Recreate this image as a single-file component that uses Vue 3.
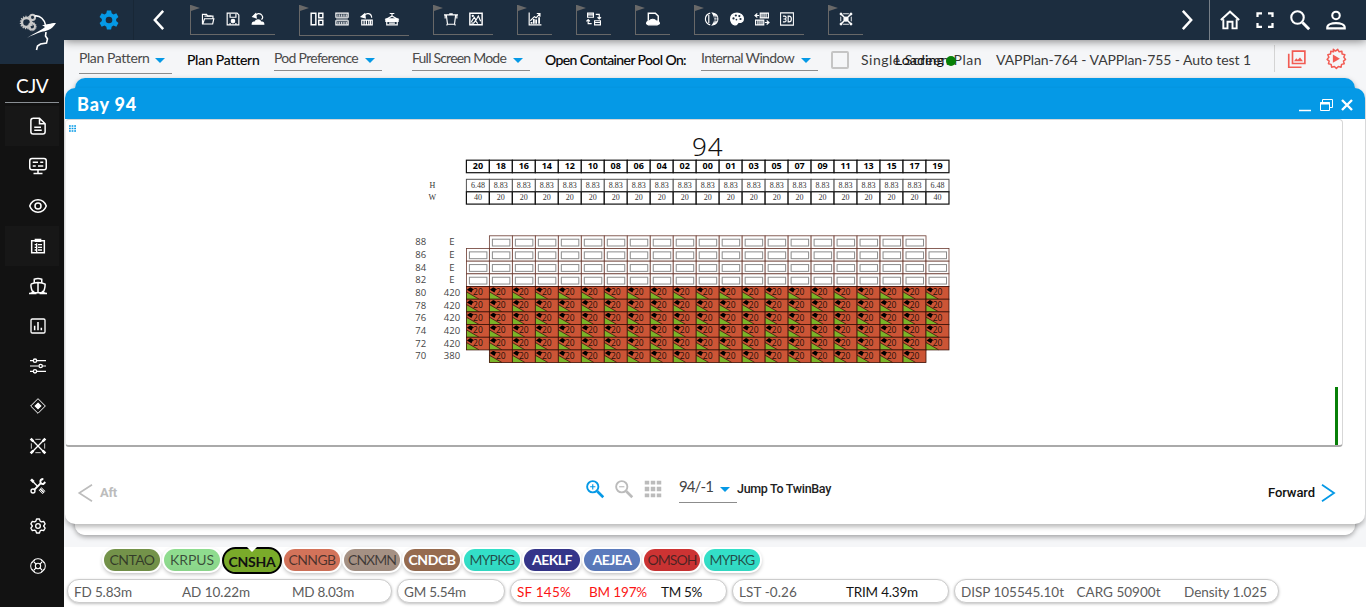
<script setup>
import { h } from 'vue'

const glyphs = {
  gear: '<path fill-rule="evenodd" fill="currentColor" stroke="none" d="M9.500 0.500h5l.7 3.500 2.200 1.300 3.400-1.300 2.500 4.400-2.700 2.300v2.600l2.700 2.300-2.500 4.400-3.400-1.300-2.200 1.300-.7 3.500h-5l-.7-3.500-2.200-1.300-3.400 1.300L.7 15.600l2.700-2.300v-2.600L.7 8.400 3.200 4l3.400 1.300L8.800 4zM12 8a4 4 0 1 0 0 8 4 4 0 0 0 0-8z"/>',
  left: '<path stroke-width="3" d="M17 1 7 12l10 11"/>',
  right: '<path stroke-width="3" d="m7 1 10 11L7 23"/>',
  folder: '<path d="M2.500 21V4h7l2 3h9v4M3 20.500l3-9h16l-2 9z"/><path d="M6 7h12"/>',
  save: '<path d="M2 2h17l3 3v17H2z"/><path d="M7 3v6h10V3M7 22v-3M17 22v-3"/><circle cx="12" cy="15.500" r="3" fill="currentColor"/>',
  restore: '<path d="M7 7c2-5 9-6 12-1 2 3 1 5-1 7"/><path fill="currentColor" d="M3 8l5-5 1 7zM2 21c0-4 3-4 5-4 1-4 8-5 10 0 3 0 5 1 5 4z"/>',
  layout: '<path stroke-width="2.500" d="M2 2h8v20H2zM15 2h7v8h-7zM15 14h7v8h-7z"/>',
  stack: '<path d="M1.500 2h21v7h-21zM1.500 15h21v7h-21z"/><path stroke-width="1.500" d="M5 4v4M8 4v4M11 4v4M14 4v4M17 4v4M20 4v4M5 17v4M8 17v4M11 17v4M14 17v4M17 17v4M20 17v4M2 12h20"/>',
  rotate: '<path d="M3 14h18v8H3zM7 14v8M11 14v8M15 14v8M18 14v8M7 7c3-7 13-5 13 3"/><path fill="currentColor" d="M2 8l6-5 1 7z"/>',
  hanger: '<path d="M8 2.500h8M12 3v4L3 12h18l-9-5"/><path fill="currentColor" d="M1.500 12h21v4h-21z"/><path d="M3 16v6h18v-6M7 19h10"/>',
  basket: '<path d="M0 5h24M4 5l2 16h12l2-16M2 5v6M22 5v6M5 21v2M19 21v2M9 3h6"/>',
  picture: '<path stroke-width="2.500" d="M1.500 2h21v20h-21z"/><path d="m4 17 5-8 3 5 4-7 4 9M4 19h4l3-4 4 5"/><circle cx="6.500" cy="6.500" r="1" fill="currentColor"/>',
  chart: '<path d="M2 1v21h21"/><path d="M6 20v-3M10 20v-8M14 20v-7M19 20V9" stroke-width="3"/><path d="m4 15 7-7 3 2 6-7M15 2.500h5.500V8"/>',
  swap: '<path d="M1 2h10v7H1zM13 15h10v7H13zM15 4h6v8M8 20H2v-7M18 9l3 3 3-3M-1 16l3-3 3 3M1 5h9M13 18h9"/>',
  reload: '<path stroke-width="2.500" d="M4 15V2h12l5 5v10"/><path fill="currentColor" d="M1 20c0-4 3-5 5-5 3-4 9-3 11 0 4 0 6 2 6 5l-4 2H4z"/>',
  contrast: '<path d="M9 2C-2 5-2 19 9 22M6.500 5v14"/><path fill="currentColor" d="M13 2c12 2 12 18 0 20 5-6 5-13 0-20z"/><path stroke="#1c2d3f" stroke-width="1.200" d="M17 6v12M20 8v8M15 9h6M15 14h6"/>',
  palette: '<path fill="currentColor" d="M12 2C-4 3 0 21 8 22c5 1 4-4 7-4 4 0 8-1 8-7 0-5-5-9-11-9z"/><g fill="#1c2d3f" stroke="none"><circle cx="6" cy="11" r="1.900"/><circle cx="10" cy="6" r="1.900"/><circle cx="16" cy="7" r="1.900"/><circle cx="18" cy="12" r="1.900"/><circle cx="11" cy="13" r="1.500"/></g>',
  transfer: '<path d="M9 2h14v8H9zM12 2v8M15.500 2v8M19 2v8M1 14h14v8H1zM5 14v8M8.500 14v8M12 14v8M7 6H0M4 2.500 0 6l4 3.500M17 18h7M20 14.500l4 3.500-4 3.500"/>',
  three: '<path stroke-width="1.800" d="M1 1.500h22v21H1z"/><path d="M5 7h3q2.500 0 2.500 2.500T8 12H6m2 0q2.500 0 2.500 2.500T8 17H5M14 7v10h1.500q4 0 4-5t-4-5z"/>',
  lashing: '<path stroke-width="2.500" d="m3 3 18 18M21 3 3 21"/><path stroke-width="4" d="m2 2 3 3M22 2l-3 3M2 22l3-3M22 22l-3-3"/><path stroke-width="1.500" d="M7 3h10M7 21h10M3 8v8M21 8v8"/><circle cx="12" cy="12" r="3.500" fill="currentColor"/>',
  home: '<path stroke-width="2.300" d="M1 12 12 2l11 10M4 11v11h5v-8h6v8h5V11"/>',
  full: '<path stroke-width="3" d="M2 8V3h6M16 3h6v5M22 16v5h-6M8 21H2v-5"/>',
  search: '<circle cx="9" cy="9" r="7.500" stroke-width="2.500"/><path stroke-width="3.500" d="m15 15 8 8"/>',
  user: '<circle cx="12" cy="6.500" r="4.500" stroke-width="2.500"/><path stroke-width="2.500" d="M1.500 22v-1c0-7 21-7 21 0v1z"/>',
  doc: '<path d="M5 1.500h9L21.500 9v10.500q0 3-3 3h-13q-3 0-3-3v-15q0-3 3-3zM14 2v7h7M7 13.500h9M7 17.500h10"/>',
  monitor: '<rect x="1" y="2" width="22" height="15" rx="3"/><path d="M5 7h7M15 7h4M5 12h4M12 12h7M12 17v4M6 22h12"/>',
  eye: '<path d="M1 12C5 1 19 1 23 12 19 23 5 23 1 12z"/><circle cx="12" cy="12" r="4"/>',
  list: '<path stroke-width="2.200" d="M2.500 4h19v18h-19z"/><path fill="currentColor" d="M8 2h8v3H8z"/><path d="M7 10h2M12 10h6M7 14h2M12 14h6M7 18h2M12 18h6M10 8v13"/>',
  ship: '<path d="M7 7V3q5-2 10 0v4M2.500 9.500c5-3 14-3 19 0 0 5-1 9-4 12M2.500 9.500c0 5 1 9 4 12M12 7.500V21M0 22c4 0 5-2 7-3M24 22c-4 0-5-2-7-3M3 22h7M14 22h7M7 21h10"/>',
  bars: '<rect x="1.500" y="1.500" width="21" height="21" rx="2"/><path d="M7 18.500v-7M12 18.500V6M17 18.500v-4" stroke-width="2.300"/>',
  sliders: '<path stroke-width="1.800" d="M0 4h5M10 4h14M0 12h13M18 12h6M0 20h5M10 20h14"/><circle cx="7.500" cy="4" r="2.500"/><circle cx="16" cy="12" r="2.500"/><circle cx="7.500" cy="20" r="2.500"/>',
  diamond: '<path stroke-width="1.500" d="M12 1 23 12 12 23 1 12z"/><path fill="currentColor" d="m12 8 4 4-4 4-4-4z"/>',
  frame: '<path d="m2 2 20 20M22 2 2 22"/><path stroke-width="4" d="m1 1 4 4M23 1l-4 4M1 23l4-4M23 23l-4-4"/><path stroke-width="1.200" d="M8 2h8M8 22h8M2 8v8M22 8v8"/>',
  tools: '<path stroke-width="4" d="m1.500 2 4 4"/><path stroke-width="2" d="m5 6 7 7"/><path stroke-width="6" d="m15 16 6 6"/><path stroke-width="2.800" d="m6 18 11-11"/><circle cx="4.500" cy="19.500" r="3"/><path stroke-width="2.800" d="M20 1.500c-6 0-6 8 0 7.500l3-3"/><path stroke="#121212" stroke-width="1" d="m14 17 6 6M16 15l6 6"/>',
  cog: '<path stroke-width="2" stroke-linejoin="round" d="M9.800 1.500h4.400l1 3.200 2 1.200 3.300-.8 2.200 3.800L20.400 12l2.300 3.100-2.200 3.800-3.300-.8-2 1.200-1 3.200H9.800l-1-3.200-2-1.200-3.300.8-2.200-3.800L3.600 12 1.300 8.900l2.200-3.800 3.300.8 2-1.200z"/><circle cx="12" cy="12" r="3.500"/>',
  buoy: '<circle cx="12" cy="12" r="11" stroke-width="1.500"/><circle cx="12" cy="12" r="4" stroke-width="1.600"/><path stroke-width="1.600" d="m6 6 3.500 3.500M18 6l-3.500 3.500M6 18l3.500-3.500M18 18l-3.500-3.500"/><path stroke-width="1.300" d="M8 2 5 6 2 8M16 2l3 4 3 2M8 22l-3-4-3-2M16 22l3-4 3-2"/>',
  gallery: '<path stroke-width="2.200" d="M1 5v18h17M6 1.500h16.500V18H6z"/><path fill="currentColor" d="m8 15 3-4 2 2 3-3 4 5z" stroke="none"/>',
  play: '<path stroke-width="1.700" stroke-linejoin="round" d="m9.500 1.500 2.500 2 2.500-2 1.700 2.800 3.100-.7.200 3.200 3.200.8-1.200 3L23.500 13l-2.400 2 .9 3-3.100.7-.5 3.200-3.100-.8-2.300 2.200-2.300-2.200-3.100.8-.6-3.200-3.100-.7.900-3-2.400-2 2-2.400-1.200-3 3.200-.8.200-3.200 3.100.7z"/><path fill="currentColor" stroke="none" d="m9 7.500 8 4.700-8 4.700z"/>',
  zoomin: '<circle cx="9" cy="9" r="7.500" stroke-width="2.500"/><path stroke-width="3.500" d="m15 15 8 8"/><path stroke-width="1.500" d="M5.500 9h7M9 5.500v7"/>',
  zoomout: '<circle cx="9" cy="9" r="7.500" stroke-width="2.500"/><path stroke-width="3.500" d="m15 15 8 8"/><path stroke-width="1.500" d="M5.500 9h7"/>',
  dots: '<path fill="currentColor" stroke="none" d="M1 1h6v5H1zm8 0h6v5H9zm8 0h6v5h-6zM1 9h6v6H1zm8 0h6v6H9zm8 0h6v6h-6zM1 18h6v5H1zm8 0h6v5H9zm8 0h6v5h-6z"/>',
  chevL: '<path stroke-width="2.200" d="M20 1 3 12l17 11"/>',
  chevR: '<path stroke-width="2.400" d="m4 1 16 11L4 23"/>',
}
const Icon = (p) => h('svg', {
  viewBox: '0 0 24 24', width: p.size || 18, height: p.size || 18, fill: 'none',
  stroke: 'currentColor', 'stroke-width': 2, innerHTML: glyphs[p.name],
})
Icon.props = ['name', 'size']

// Tracks a label so that it fills the given width in pixels.
const vFit = {
  mounted(el, { value }) {
    const range = document.createRange()
    range.selectNodeContents(el)
    const natural = range.getBoundingClientRect().width
    el.style.letterSpacing = (value - natural) / el.textContent.length + 'px'
  },
}

const side = ['doc', 'monitor', 'eye', 'list', 'ship', 'bars', 'sliders', 'diamond', 'frame', 'tools', 'cog', 'buoy']
const groups = [
  ['folder', 'save', 'restore'], ['layout', 'stack', 'rotate', 'hanger'], ['basket', 'picture'], ['chart'],
  ['swap'], ['reload'], ['contrast', 'palette', 'transfer', 'three'], ['lashing'],
]
const ports = [
  ['CNTAO', '#74934a', 45], ['KRPUS', '#8fdc8f', 44], ['CNSHA', '#7aab2a', 47], ['CNNGB', '#d3735a', 47],
  ['CNXMN', '#a59184', 48], ['CNDCB', '#966b4f', 47], ['MYPKG', '#33dfc8', 45], ['AEKLF', '#35358a', 40],
  ['AEJEA', '#5b7bbd', 39], ['OMSOH', '#cd3333', 49], ['MYPKG', '#33dfc8', 45],
]
const textTone = (c) => (c === 'CNSHA' ? 'current' : ['CNDCB', 'AEKLF', 'AEJEA'].includes(c) ? 'light' : '')

const cols = ['20', '18', '16', '14', '12', '10', '08', '06', '04', '02', '00', '01', '03', '05', '07', '09', '11', '13', '15', '17', '19']
const tiers = [
  ['88', 'E'], ['86', 'E'], ['84', 'E'], ['82', 'E'], ['80', '420'], ['78', '420'], ['76', '420'], ['74', '420'], ['72', '420'], ['70', '380'],
]
const CW = 22.98
const RH = 12.68
const cx = (i) => 400.4 + i * CW
const ry = (r) => 115.8 + r * RH
const cells = tiers.flatMap(([t], r) =>
  cols.map((_, i) => ({ i, r, full: r > 3 })).filter(({ i }) => !((t === '88' || t === '70') && (i === 0 || i === 20))),
)
</script>

<template>
  <div class="page">
    <aside class="side">
      <div class="logo">
        <svg width="64" height="64" viewBox="0 0 64 64" fill="none" stroke="#fff">
          <g stroke="#c9c9c9">
            <circle cx="26.500" cy="22.500" r="4.500" stroke-width="2.400" />
            <circle cx="26.500" cy="22.500" r="6" stroke-dasharray="1.200 1.200" stroke-width="1.500" />
            <circle cx="32.500" cy="17.300" r="2.600" stroke-width="2" />
            <circle cx="32" cy="26.500" r="3" stroke-width="2" />
            <circle cx="32" cy="26.500" r="4.300" stroke-width="1" stroke-dasharray="1 1" />
          </g>
          <path stroke-width="1.600" d="M34.500 16c6-1 10 4 11 9M46 32l-.5 4 2 3-1 4-6 1-3 2-1 4" />
          <path fill="#fff" stroke="none" d="M27 38c7-5 13-7 18-11l-3-2c5 0 8-2 14-2-4 7-10 8-15 9-5 2-9 3-14 6z" />
        </svg>
      </div>
      <div class="cjv"><span v-fit="32">CJV</span></div>
      <nav><div v-for="(n, i) in side" :key="n" class="nav" :class="{ lit: i === 0 || i === 3 }"><Icon :name="n" :size="i < 2 || i === 2 || i === 4 ? 18 : 16" /></div></nav>
    </aside>

    <main class="main">
      <header class="top">
        <div class="gear"><Icon name="gear" :size="20" /></div>
        <div class="prev"><Icon name="left" :size="20" /></div>
        <div class="groups">
          <div v-for="(g, i) in groups" :key="i" class="group" :class="{ tall: i === 1 }">
            <span v-for="n in g" :key="n" class="tool"><Icon :name="n" :size="14" /></span>
          </div>
        </div>
        <div class="next"><Icon name="right" :size="20" /></div>
        <div class="actions">
          <Icon name="home" :size="20" /><Icon name="full" :size="18" /><Icon name="search" :size="20" /><Icon name="user" :size="20" />
        </div>
      </header>

      <div class="bar">
        <div class="sel s1"><span v-fit="70">Plan Pattern</span><i /></div>
        <b class="lab l1" v-fit="72">Plan Pattern</b>
        <div class="sel s2"><span v-fit="84">Pod Preference</span><i /></div>
        <div class="sel s3"><span v-fit="94">Full Screen Mode</span><i /></div>
        <b class="lab l2" v-fit="141">Open Container Pool On:</b>
        <div class="sel s4"><span v-fit="93">Internal Window</span><i /></div>
        <div class="check" />
        <div class="single"><span v-fit="121">Single Screen Plan</span><div class="loading"><span v-fit="49">Loading</span></div><div class="dot" /></div>
        <div class="plan"><span v-fit="255">VAPPlan-764 - VAPPlan-755 - Auto test 1</span></div>
        <div class="alerts"><Icon name="gallery" :size="18" /><Icon name="play" :size="21" /></div>
      </div>

      <section class="stage">
        <div class="behind" />
        <div class="window">
          <div class="title">
            <h1 v-fit="60">Bay 94</h1>
            <svg class="wbtn" width="56" height="16" viewBox="0 0 56 16" fill="none" stroke="#fff">
              <path stroke-width="1.500" d="M0 13.500h12" />
              <path d="M23.500 5.500V2.500h10v8h-3" /><path d="M21.500 5.500h9v8h-9z" /><path stroke-width="2" d="M21 6.500h10" />
              <path stroke-width="2.400" d="m43 3 10 10M53 3 43 13" />
            </svg>
          </div>
          <div class="canvas">
            <svg width="1276" height="325" viewBox="0 0 1276 325">
              <path d="M3 6h7M3 8.500h7M3 11h7" stroke="#0599e6" stroke-width="1.700" stroke-dasharray="1.800 .8" />
              <text x="626" y="36" class="big" textLength="30.500">94</text>
              <g v-for="(c, i) in cols" :key="c">
                <rect :x="cx(i)" y="40.200" :width="CW" height="12.500" class="box" />
                <text :x="cx(i) + CW / 2" y="48.900" class="colno">{{ c }}</text>
                <rect :x="cx(i)" y="59.300" :width="CW" height="12.500" class="box thin" />
                <text :x="cx(i) + CW / 2" y="68" class="dim">{{ i === 0 || i === 20 ? '6.48' : '8.83' }}</text>
                <rect :x="cx(i)" y="71.800" :width="CW" height="12.300" class="box" />
                <text :x="cx(i) + CW / 2" y="80" class="dim">{{ i === 0 || i === 20 ? '40' : '20' }}</text>
              </g>
              <text x="366.300" y="68" class="dim">H</text>
              <text x="366.300" y="80" class="dim">W</text>
              <g v-for="([t, w], r) in tiers" :key="t" class="tier">
                <text x="354.700" :y="ry(r) + 9.500">{{ t }}</text>
                <text x="386" :y="ry(r) + 9.500">{{ w }}</text>
              </g>
              <g v-for="c in cells" :key="c.r + '-' + c.i" :transform="`translate(${cx(c.i)} ${ry(c.r)})`">
                <template v-if="c.full">
                  <rect :width="CW" :height="RH" fill="#cc5536" />
                  <path d="M0 5.800 12.500 12.680H0z" fill="#7ab428" />
                  <path d="M0 5.300 12.500 12.500" stroke="#33210c" stroke-width=".8" />
                  <path d="M.5 3.200 3.500 1h1L8 3.200H6.500L5 6z" fill="#000" />
                  <rect :width="CW" :height="RH" fill="none" stroke="#3a0f06" stroke-width=".8" />
                  <text x="11.500" y="8.900" class="load">20</text>
                </template>
                <template v-else>
                  <rect :width="CW" :height="RH" fill="#fff" stroke="#6b3a30" stroke-width=".8" />
                  <rect x="3" y="3.400" width="17.500" height="6.800" fill="#fff" stroke="#8b8b8b" stroke-width="1" />
                </template>
              </g>
            </svg>
            <div class="gauge" />
          </div>
          <footer class="foot">
            <div class="aft"><Icon name="chevL" :size="18" /><span v-fit="17">Aft</span></div>
            <div class="mid">
              <Icon name="zoomin" class="blue" /><Icon name="zoomout" /><Icon name="dots" />
              <div class="bay"><span v-fit="34">94/-1</span><i /></div>
              <span class="jump" v-fit="94">Jump To TwinBay</span>
            </div>
            <div class="fwd"><span v-fit="47">Forward</span><Icon name="chevR" :size="18" /></div>
          </footer>
        </div>
      </section>

      <div class="status">
        <div class="ports">
          <div v-for="([c, bg, w], i) in ports" :key="i" class="port" :class="textTone(c)" :style="{ backgroundColor: bg }"><span v-fit="w">{{ c }}</span></div>
        </div>
        <div class="pills">
          <div class="pill p1"><span v-fit="58">FD 5.83m</span><span v-fit="68">AD 10.22m</span><span v-fit="62">MD 8.03m</span></div>
          <div class="pill p2"><span v-fit="62">GM 5.54m</span></div>
          <div class="pill p3"><span class="red" v-fit="54">SF 145%</span><span class="red" v-fit="58">BM 197%</span><span class="dark" v-fit="41">TM 5%</span></div>
          <div class="pill p4"><span v-fit="58">LST -0.26</span><span class="dark" v-fit="72">TRIM 4.39m</span></div>
          <div class="pill p5"><span v-fit="103">DISP 105545.10t</span><span v-fit="84">CARG 50900t</span><span v-fit="83">Density 1.025</span></div>
        </div>
      </div>
    </main>
  </div>
</template>

<style>
body { margin: 0; overflow: hidden; }
</style>
<style scoped>
* { box-sizing: border-box; }
.page { display: flex; width: 1366px; height: 607px; overflow: hidden; background: #f5f6f8; font-family: Lato, "Open Sans", sans-serif; font-size: 14px; white-space: nowrap; color: #3a3a3a; }
svg { display: block; flex: none; overflow: visible; }
span, b, h1 { white-space: nowrap; }
.side { width: 64px; height: 607px; flex: none; background: #121212; color: #fff; }
.logo { height: 64px; background: #1c2d3f; }
.cjv { height: 39px; margin: 0 5px 3px; border-bottom: 1px solid #8a8f94; text-align: center; font-size: 19px; line-height: 44px; }
.nav { height: 40px; margin: 0 5px; padding-left: 12px; display: flex; align-items: center; justify-content: center; }
.nav.lit { background: #171717; }
.main { width: 1302px; display: flex; flex-direction: column; }
.top { height: 40px; flex: none; background: #1c2d3f; color: #fff; display: flex; position: relative; z-index: 2; box-shadow: 0 1px 9px rgba(0,0,0,.5); clip-path: inset(0 0 -12px 0); }
.gear { width: 70px; padding: 10px 0 0 35px; color: #0599e6; border-right: 1px solid #182736; }
.prev { width: 56px; padding: 10px 0 0 15px; }
.groups { width: 987px; display: flex; gap: 24px; align-items: flex-start; padding-top: 5px; }
.group { position: relative; height: 30px; padding: 0 5px 0 4px; display: flex; border-left: 1px solid #686868; border-bottom: 1px solid #686868; }
.group.tall { height: 31px; }
.group::before { content: ""; position: absolute; left: 0; top: 0; border-left: 9px solid #686868; border-top: 3px solid transparent; border-bottom: 3px solid transparent; }
.tool { width: 25px; height: 28px; display: flex; justify-content: center; align-items: center; }
.next { width: 33px; padding: 10px 0 0; border-right: 1px solid #777f88; }
.actions { display: flex; gap: 16px; align-items: center; padding-left: 10px; }
.bar { height: 38px; flex: none; display: flex; padding-left: 15px; }
.sel { height: 31px; flex: none; border-bottom: 1px solid #8c8c8c; display: flex; position: relative; padding-top: 9px; line-height: 18px; color: #4a4a4a; }
.s1 { width: 93px; height: 34px; }
.s2 { width: 108px; margin-left: 15px; }
.s3 { width: 118px; margin-left: 30px; }
.s4 { width: 117px; margin-left: 15px; }
.sel i, .bay i { margin-left: auto; margin-right: 7px; margin-top: 9px; width: 0; height: 0; border: 5px solid transparent; border-top-color: #0599e6; border-bottom: 0; }
.lab { flex: none; font-weight: 400; line-height: 19px; padding-top: 10px; color: #000; -webkit-text-stroke: .15px #000; }
.l1 { width: 72px; margin-left: 15px; }
.l2 { width: 141px; margin-left: 15px; }
.check { width: 18px; height: 18px; margin: 11px 12px 0 13px; border: 2px solid #c5c5c5; border-radius: 2px; flex: none; }
.single { position: relative; width: 135px; flex: none; padding-top: 11px; line-height: 18px; }
.loading { position: absolute; left: 34px; top: 11px; color: #111; }
.dot { position: absolute; left: 85px; top: 16px; width: 10px; height: 10px; border-radius: 50%; background: #078007; }
.plan { width: 278px; flex: none; padding-top: 10px; line-height: 19px; }
.alerts { height: 27px; margin-top: 5px; border-left: 1px solid #d4d4d4; padding-left: 13px; display: flex; gap: 19px; align-items: center; color: #f25c54; }
.stage { height: 469px; flex: none; position: relative; padding: 10px 1px 0; }
.behind { position: absolute; left: 11px; top: 0; width: 1280px; height: 457px; border-radius: 10px; background: linear-gradient(#0599e6 40px, #fff 40px); box-shadow: 0 2px 5px rgba(0,0,0,.35); }
.window { position: relative; width: 1300px; height: 436px; border-radius: 10px; background: #fff; box-shadow: 0 3px 5px rgba(0,0,0,.28); }
.title { height: 31px; background: #0599e6; border-radius: 10px 10px 0 0; display: flex; justify-content: space-between; padding: 0 10px 0 12px; }
h1 { margin: 0; color: #fff; font-size: 18px; font-weight: 900; line-height: 32px; }
.wbtn { margin-top: 9px; }
.canvas { position: relative; width: 1278px; height: 328px; border: 1px solid #d7d7d7; border-left-color: #eee; border-bottom: 2px solid #aaa; border-radius: 4px; }
.gauge { position: absolute; right: 4px; bottom: 0; width: 3px; height: 58px; background: #078007; }
.box { fill: #fff; stroke: #111; stroke-width: 1.2; }
.thin { stroke: #555; stroke-width: 1; }
.big { font: 300 26px "Noto Sans", "Open Sans", sans-serif; fill: #111; stroke: none; }
.colno { font: 700 9px "Open Sans", sans-serif; text-anchor: middle; fill: #000; }
.dim { font: 8px "Liberation Serif", serif; text-anchor: middle; fill: #333; }
.tier text { font: 9.500px "Open Sans", sans-serif; text-anchor: middle; fill: #444; }
.load { font: 8.500px "Open Sans", sans-serif; text-anchor: middle; fill: #24100a; }
.foot { height: 77px; display: flex; font-family: Roboto, sans-serif; font-size: 13px; }
.aft { width: 521px; padding: 37px 0 0 12px; display: flex; gap: 5px; color: #bcbcbc; font-weight: 700; line-height: 18px; }
.mid { width: 682px; display: flex; gap: 11px; padding-top: 33px; color: #bbb; }
.blue { color: #0599e6; }
.bay { width: 58px; height: 23px; margin: 0 -11px 0 6px; border-bottom: 1px solid #8c8c8c; display: flex; color: #444; font: 15px/17px Lato, sans-serif; }
.bay span { margin-top: -2px; }
.bay i { margin-top: 7px; }
.jump { color: #222; font-weight: 500; font-size: 12.500px; line-height: 18px; }
.fwd { display: flex; gap: 4px; padding-top: 37px; line-height: 18px; color: #111; font-weight: 500; }
.fwd svg { color: #0599e6; }
.status { height: 60px; flex: none; background: #fff; }
.ports { height: 28px; padding: 2px 0 0 40px; display: flex; gap: 4px; }
.port { position: relative; width: 56px; height: 22px; border-radius: 11px; box-shadow: 0 0 0 2px #fff, 0 2px 4px 1px rgba(0,0,0,.3); text-align: center; line-height: 22px; color: rgba(30,30,30,.75); background-image: linear-gradient(transparent 45%, rgba(0,0,0,.04)); }
.current { width: 60px; height: 27px; margin: -2px -2px 0; border: 2px solid #000; border-radius: 14px; box-shadow: none; line-height: 25px; color: #111; font-weight: 700; }
.current::before { content: ""; position: absolute; left: 23px; top: -2px; border: 5px solid transparent; border-top-color: #fff; border-bottom: 0; }
.light { color: #fff; font-weight: 700; }
.pills { display: flex; gap: 5px; padding: 4px 0 0 3px; }
.pill { height: 24px; border: 1px solid #ccc; border-radius: 12px; background: #fff; display: flex; padding-left: 6px; line-height: 25px; color: #5c5c5c; box-shadow: 0 1px 3px rgba(0,0,0,.25); font-size: 13.500px; }
.pill span { flex: none; }
.p1 { width: 325px; }
.p1 span { width: 68px; }
.p1 span:nth-child(2) { margin-left: 40px; }
.p1 span:nth-child(3) { margin-left: 42px; }
.p2 { width: 108px; }
.p3 { width: 217px; }
.p3 span { width: 72px; }
.p4 { width: 217px; }
.p4 span { width: 107px; }
.p5 { width: 325px; }
.p5 span { width: 115.500px; }
.p5 span:nth-child(2) { width: 107.500px; }
.pill .red { color: #fb1515; }
.pill .dark { color: #151515; }
</style>
